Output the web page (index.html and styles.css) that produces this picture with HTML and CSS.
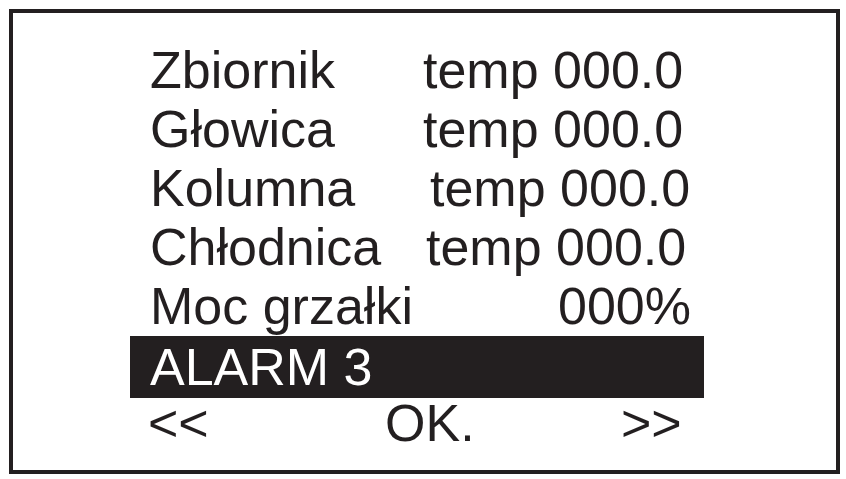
FILE: index.html
```html
<!DOCTYPE html>
<html lang="pl">
<head>
<meta charset="utf-8">
<title>Panel sterownika</title>
<link rel="stylesheet" href="styles.css">
</head>
<body>
<div class="panel">
  <div class="screen">
    <div class="row">
      <span class="label">Zbiornik</span>
      <span class="value">temp 000.0</span>
    </div>
    <div class="row">
      <span class="label">Głowica</span>
      <span class="value">temp 000.0</span>
    </div>
    <div class="row">
      <span class="label">Kolumna</span>
      <span class="value value--k">temp 000.0</span>
    </div>
    <div class="row">
      <span class="label">Chłodnica</span>
      <span class="value value--c">temp 000.0</span>
    </div>
    <div class="row">
      <span class="label">Moc grzałki</span>
      <span class="value value--end">000%</span>
    </div>
    <div class="row row--selected">
      <span class="label">ALARM 3</span>
    </div>
    <div class="nav">
      <span class="nav__prev">&lt;&lt;</span>
      <span class="nav__ok">OK.</span>
      <span class="nav__next">&gt;&gt;</span>
    </div>
  </div>
</div>
</body>
</html>
```
FILE: styles.css
```css
* {
  box-sizing: border-box;
}

html, body {
  margin: 0;
  padding: 0;
  background: #ffffff;
}

body {
  width: 846px;
  height: 479px;
  overflow: hidden;
  font-family: "Liberation Sans", Arial, sans-serif;
  color: #231f20;
}

.panel {
  margin: 9px 0 0 9px;
  width: 831px;
  height: 465px;
  border: 4px solid #231f20;
  padding: 28px 0 0 117px;
}

.screen {
  width: 574px;
  font-size: 52px;
  line-height: 59px;
}

.row {
  display: grid;
  grid-template-columns: 273px 1fr;
  padding-left: 20px;
  white-space: nowrap;
}

.value--k {
  padding-left: 7px;
}

.value--c {
  padding-left: 3px;
}

.value--end {
  justify-self: end;
  padding-right: 13px;
}

.row--selected {
  padding-top: 2px;
  padding-bottom: 1px;
  background: #231f20;
  color: #ffffff;
}

.nav {
  display: grid;
  grid-template-columns: 237px 236px auto;
  padding-left: 18px;
  line-height: 50px;
}
```
